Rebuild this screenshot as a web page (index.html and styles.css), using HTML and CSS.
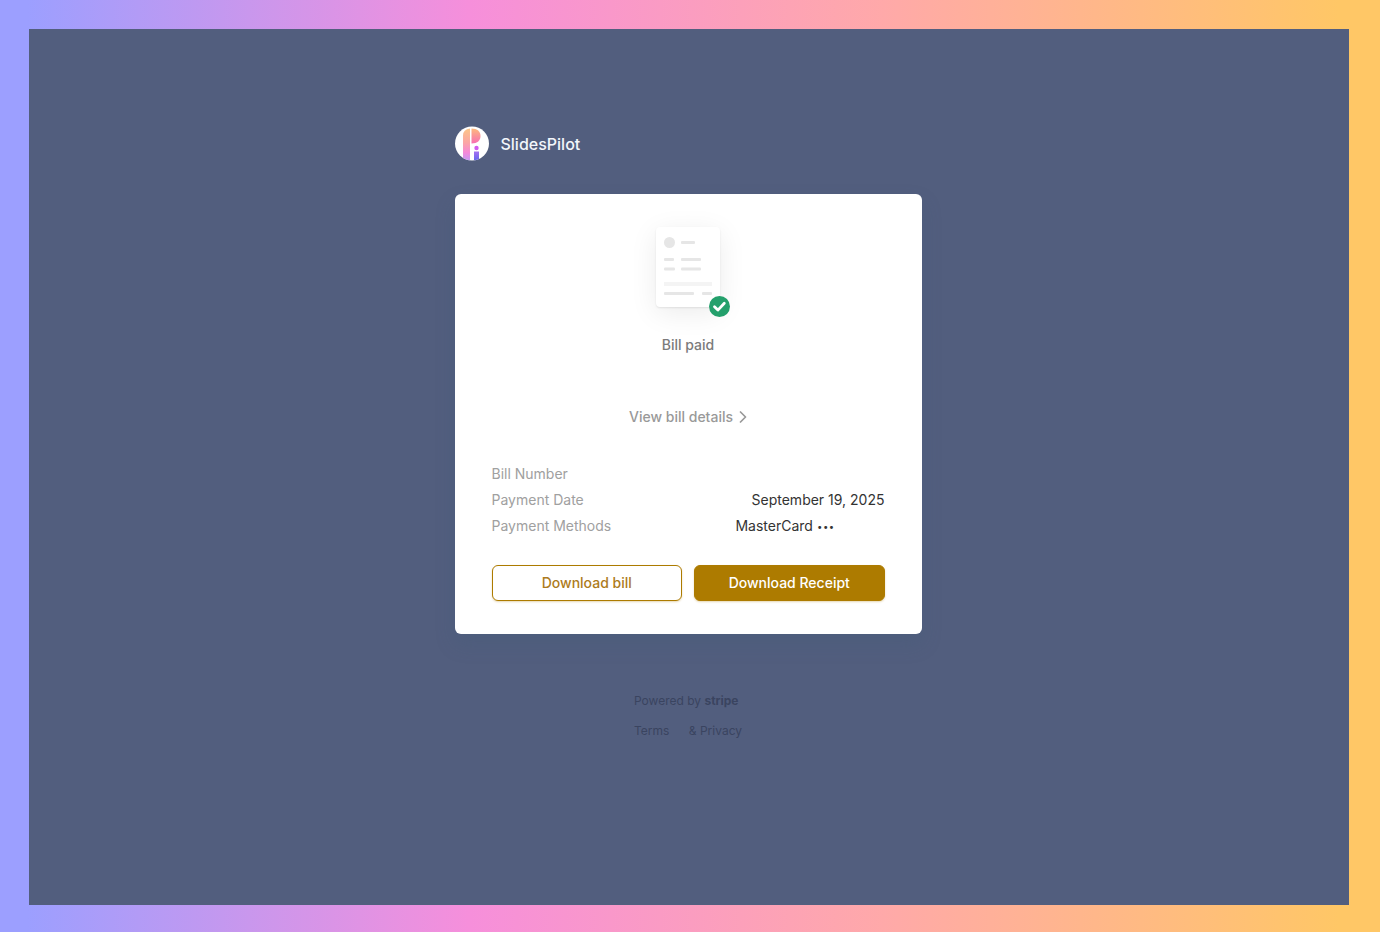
FILE: index.html
```html
<!doctype html>
<html lang="en">
  <head>
    <meta charset="UTF-8">
    <meta content="width=device-width, initial-scale=1.0" name="viewport">
    <title>SlidesPilot</title>
    <link rel="stylesheet" href="styles.css">
  </head>
  <body>
    <div class="page">
      <main class="content">
        <header class="brand">
          <svg class="brand-logo" viewBox="0 0 34 34" aria-hidden="true">
            <defs>
              <linearGradient id="stem" x1="0" y1="0" x2="0" y2="1">
                <stop offset="0" stop-color="#fcc688"/>
                <stop offset=".45" stop-color="#fba5a5"/>
                <stop offset=".75" stop-color="#f589d8"/>
                <stop offset="1" stop-color="#c49af5"/>
              </linearGradient>
              <linearGradient id="bowl" x1="0" y1="0" x2="0" y2="1">
                <stop offset="0" stop-color="#fdb97c"/>
                <stop offset="1" stop-color="#f76fb4"/>
              </linearGradient>
              <linearGradient id="dot" x1="0" y1="0" x2="0" y2="1">
                <stop offset="0" stop-color="#a56ff0"/>
                <stop offset="1" stop-color="#6466ee"/>
              </linearGradient>
              <clipPath id="round"><circle cx="17" cy="17" r="17"/></clipPath>
            </defs>
            <circle cx="17" cy="17" r="17" fill="#fff"/>
            <g clip-path="url(#round)">
              <path d="M8 34V9q0-6 7-7v32z" fill="url(#stem)"/>
              <path d="M16.500 2c6 0 9 3 9 7.500s-3 7.500-9 7.500z" fill="url(#bowl)"/>
              <circle cx="21.500" cy="21.500" r="2.200" fill="#d05df0"/>
              <path d="M19 25h5v9h-5z" fill="url(#dot)"/>
            </g>
          </svg>
          <h1>SlidesPilot</h1>
        </header>

        <section class="card">
          <div class="bill">
            <svg viewBox="0 0 64 80" aria-hidden="true">
              <g fill="#e6e6e6">
                <circle cx="13.500" cy="15.500" r="5.500"/>
                <rect x="25" y="14" width="14" height="3" rx="1"/>
                <rect x="8" y="31" width="10" height="3" rx="1"/>
                <rect x="25" y="31" width="20" height="3" rx="1"/>
                <rect x="8" y="40.500" width="11" height="3" rx="1"/>
                <rect x="25" y="40.500" width="20" height="3" rx="1"/>
                <rect x="8" y="65" width="30" height="3" rx="1"/>
                <rect x="46" y="65" width="10" height="3" rx="1"/>
              </g>
              <rect x="8" y="55" width="48" height="4" fill="#f4f4f4"/>
            </svg>
            <svg class="bill-check" viewBox="0 0 21 21" aria-hidden="true">
              <circle cx="10.500" cy="10.500" r="10.500" fill="#24a06c"/>
              <path d="M5.500 10.800l3.400 3.300 6.400-6.800" fill="none" stroke="#fff" stroke-width="2.800" stroke-linecap="round" stroke-linejoin="round"/>
            </svg>
          </div>
          <h2>Bill paid</h2>
          <a class="details-link" href="#">View bill details
            <svg viewBox="0 0 8 12" aria-hidden="true"><path d="M1.500 1l5 5-5 5" fill="none" stroke="currentColor" stroke-width="1.700" stroke-linecap="round" stroke-linejoin="round"/></svg>
          </a>
          <table class="summary">
            <tr><th scope="row">Bill Number</th><td></td></tr>
            <tr><th scope="row">Payment Date</th><td>September 19, 2025</td></tr>
            <tr><th scope="row">Payment Methods</th><td class="method">MasterCard <span class="dots">•••</span></td></tr>
          </table>
          <div class="actions">
            <button type="button" class="outline">Download bill</button>
            <button type="button" class="filled">Download Receipt</button>
          </div>
        </section>

        <footer>
          <p>Powered by <b>stripe</b></p>
          <p class="legal"><a href="#">Terms</a> <a href="#">&amp; Privacy</a></p>
        </footer>
      </main>
    </div>
  </body>
</html>
```
FILE: styles.css
```css
* {
  box-sizing: border-box
}
body {
  background: linear-gradient(90deg, #9c9fff 2%, #f68fdb 34%, #ffa9a9 64%, #ffc766 97%);
  color: #333;
  display: flex;
  font-family: Inter, "Liberation Sans", sans-serif;
  font-size: 14px;
  line-height: 20px;
  margin: 0;
  min-height: 100vh;
  padding: 29px 31px 27px 29px
}
h1, h2, p {
  margin: 0
}
a {
  color: inherit;
  text-decoration: none
}
.page {
  background: #525e7e;
  flex: 1;
  padding: 97px 22px 40px 20px
}
.content {
  margin: 0 auto;
  max-width: 467px
}
.brand {
  align-items: center;
  color: #fff;
  display: flex;
  gap: 12px
}
.brand-logo {
  height: 35px;
  width: 34px
}
.brand h1 {
  color: #f3f6fb;
  font-size: 16px;
  font-weight: 500
}
.card {
  align-items: center;
  background: #fff;
  border-radius: 6px;
  box-shadow: 0 10px 20px rgba(60, 90, 120, .22);
  display: flex;
  flex-direction: column;
  margin-top: 33px;
  padding: 33px 37px 33px
}
.bill {
  background: #fff;
  border-radius: 4px;
  box-shadow: 0 1px 2px rgba(0, 0, 0, .09), 0 6px 28px rgba(0, 0, 0, .08);
  height: 80px;
  position: relative;
  width: 64px
}
.bill svg {
  display: block
}
.bill .bill-check {
  bottom: -10px;
  height: 21px;
  position: absolute;
  right: -10px;
  width: 21px
}
.card h2 {
  color: #7b7b7b;
  font-size: 14px;
  font-weight: 500;
  margin-top: 28px
}
.details-link {
  align-items: center;
  color: #999;
  display: flex;
  font-weight: 500;
  gap: 6px;
  margin-top: 52px
}
.details-link svg {
  height: 12px;
  width: 8px
}
.summary {
  border-collapse: collapse;
  line-height: 26px;
  margin-top: 34px;
  width: 100%
}
.summary th, .summary td {
  height: 26px;
  padding: 0;
  vertical-align: top
}
.summary th {
  color: #a0a0a0;
  font-weight: 400;
  text-align: left
}
.summary td {
  text-align: right
}
.summary .method {
  padding-right: 50px
}
.dots {
  font-family: "DejaVu Sans", sans-serif;
  font-size: 10px;
  line-height: 10px
}
.actions {
  display: grid;
  gap: 12px;
  grid-template-columns: 1fr 1fr;
  margin-top: 26px;
  width: 100%
}
.actions button {
  border: 1px solid #ad7b00;
  border-radius: 6px;
  box-shadow: 0 1px 2px rgba(173, 123, 0, .3);
  cursor: pointer;
  font: 500 14px/20px Inter, "Liberation Sans", sans-serif;
  height: 36px
}
.outline {
  background: #fff;
  color: #ad7b20
}
.filled {
  background: #ad7b00;
  color: #fff
}
footer {
  color: #3a4460;
  font-size: 12px;
  margin: 57px auto 0;
  width: 108px
}
.legal {
  display: flex;
  justify-content: space-between;
  margin-top: 10px
}
```
